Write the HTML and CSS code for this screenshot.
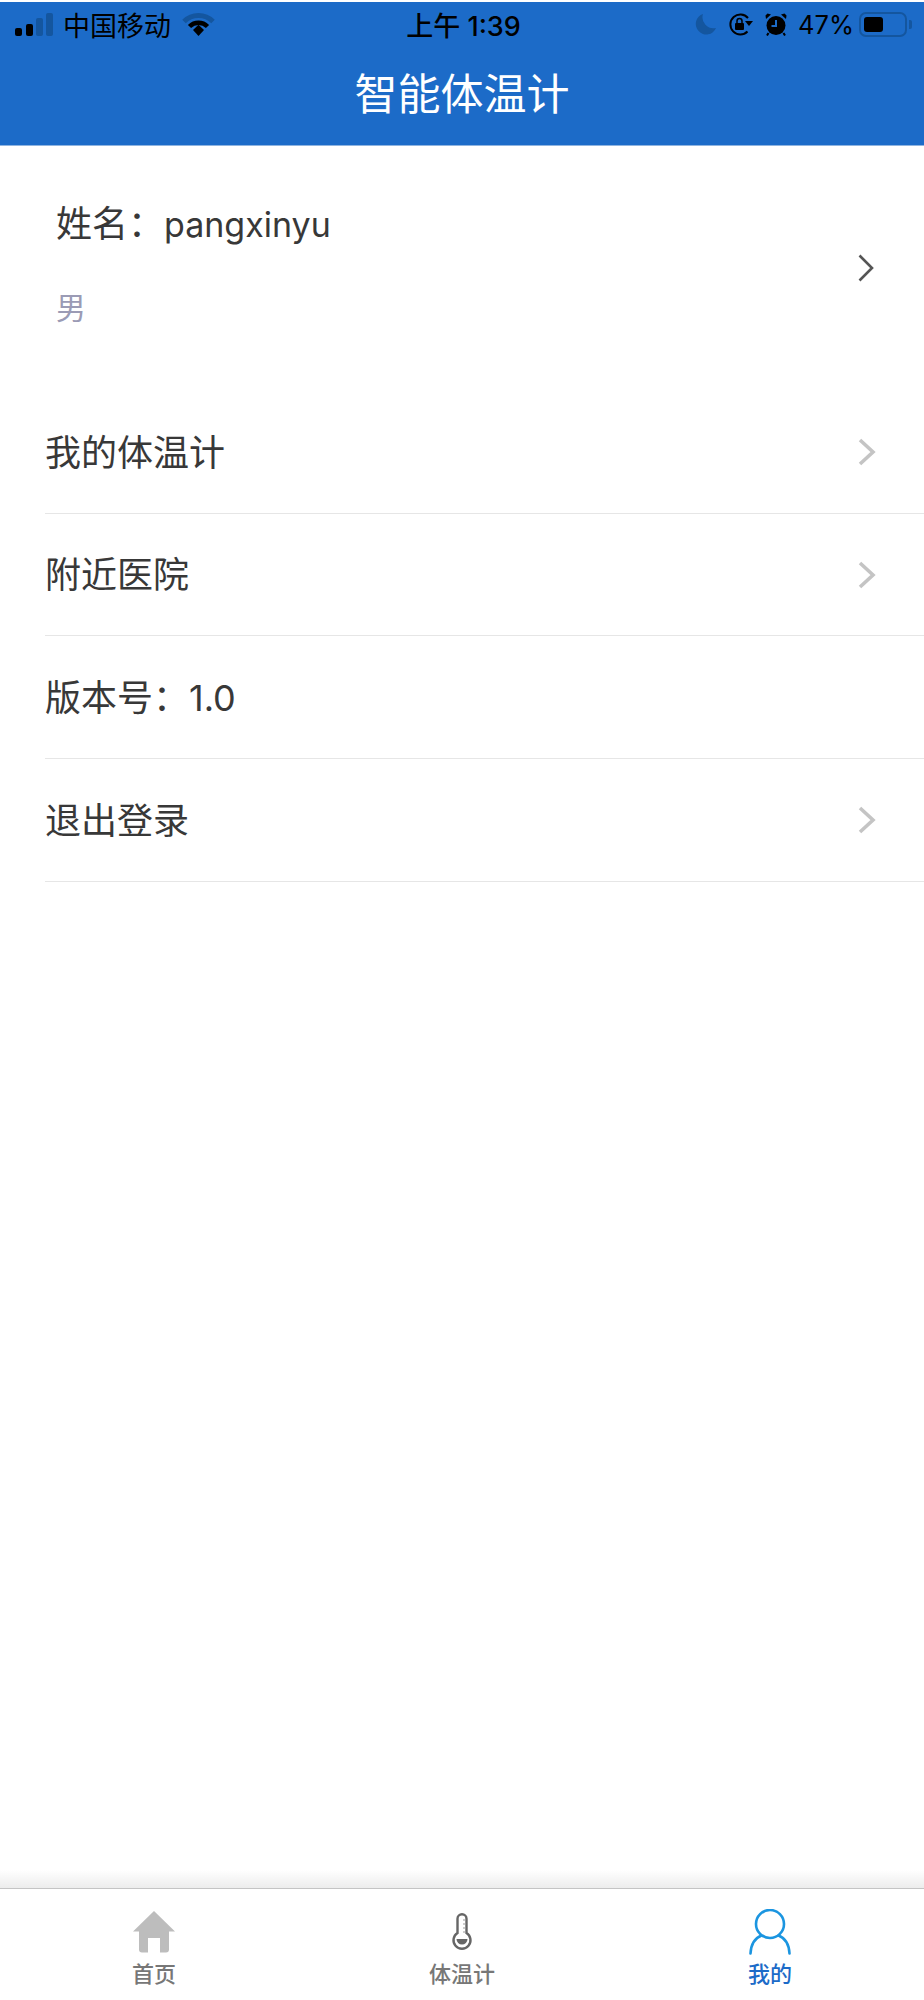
FILE: index.html
```html
<!DOCTYPE html>
<html lang="zh-CN">
<head>
  <meta charset="UTF-8" />
  <title>智能体温计</title>
  <link rel="stylesheet" href="styles.css">
</head>
<body>
  <div class="page">
    <header class="app-header">
      <div class="status-bar">
        <div class="status-left">
          <svg class="icon-signal" width="38" height="23" viewBox="0 0 38 23">
            <rect x="0" y="15" width="7" height="8" rx="2" fill="#000"/>
            <rect x="11" y="11" width="7" height="12" rx="2" fill="#000"/>
            <rect x="21" y="5" width="7" height="18" rx="2" fill="#14569f"/>
            <rect x="31" y="0" width="7" height="23" rx="2" fill="#14569f"/>
          </svg>
          <span class="carrier">中国移动</span>
          <svg class="icon-wifi" width="33" height="24" viewBox="0 0 32 24" fill="none">
            <path d="M1.500 9.500C9.500 1.500 22.500 1.500 30.500 9.500" stroke="#14569f" stroke-width="5"/>
            <path d="M7 14.500C12 9.500 20 9.500 25 14.500" stroke="#000" stroke-width="4.500"/>
            <path d="M10.500 18L16 12.800L21.500 18L16 24Z" fill="#000"/>
          </svg>
        </div>
        <div class="status-time">上午 1:39</div>
        <div class="status-right">
          <svg class="icon-moon" width="22" height="21" viewBox="0 0 22 21">
            <path d="M9 0A10.500 10.500 0 1 0 22 14A11 11 0 0 1 9 0Z" fill="#14569f"/>
          </svg>
          <svg width="25" height="23" viewBox="0 0 25 23" fill="none">
            <path d="M19.500 18.500A10 10 0 1 1 20 5" stroke="#000" stroke-width="2"/>
            <path d="M17 8H25L21 13Z" fill="#000"/>
            <rect x="7" y="10" width="9" height="7" rx="1" fill="#000"/>
            <path d="M9 10V8A2.500 2.500 0 0 1 14 8V10" stroke="#000" stroke-width="1.500"/>
          </svg>
          <svg width="22" height="23" viewBox="0 0 22 23">
            <circle cx="11" cy="12.500" r="9.500" fill="#000"/>
            <path d="M1 6L6 1.500L2.500 0.500L0.500 2.500Z" fill="#000"/>
            <path d="M21 6L16 1.500L19.500 0.500L21.500 2.500Z" fill="#000"/>
            <path d="M3.500 20L2 22.500M18.500 20L20 22.500" stroke="#000" stroke-width="2"/>
            <path d="M11 7V13H6.500" stroke="#1c6bc8" stroke-width="2" fill="none"/>
          </svg>
          <span class="battery-pct">47%</span>
          <div class="battery">
            <div class="battery-body"><div class="battery-fill"></div></div>
            <div class="battery-nub"></div>
          </div>
        </div>
      </div>
      <h1 class="app-title">智能体温计</h1>
    </header>

    <main class="content">
      <section class="profile">
        <div class="profile-info">
          <div class="profile-name">姓名：<span class="profile-value">pangxinyu</span></div>
          <div class="profile-gender">男</div>
        </div>
        <svg class="chevron" width="16" height="28" viewBox="0 0 16 28" fill="none">
          <path d="M1.500 1.500L14 14L1.500 26.500" stroke="#555" stroke-width="2.600"/>
        </svg>
      </section>

      <ul class="menu">
        <li class="menu-row">
          <span>我的体温计</span>
          <svg class="chevron" width="18" height="28" viewBox="0 0 18 28" fill="none">
            <path d="M2 2L15 14L2 26" stroke="#c4c4c4" stroke-width="3.600"/>
          </svg>
        </li>
        <li class="menu-row">
          <span>附近医院</span>
          <svg class="chevron" width="18" height="28" viewBox="0 0 18 28" fill="none">
            <path d="M2 2L15 14L2 26" stroke="#c4c4c4" stroke-width="3.600"/>
          </svg>
        </li>
        <li class="menu-row">
          <span>版本号：1.0</span>
        </li>
        <li class="menu-row">
          <span>退出登录</span>
          <svg class="chevron" width="18" height="28" viewBox="0 0 18 28" fill="none">
            <path d="M2 2L15 14L2 26" stroke="#c4c4c4" stroke-width="3.600"/>
          </svg>
        </li>
      </ul>
    </main>

    <div class="tab-shadow"></div>
    <nav class="tab-bar">
      <div class="tab">
        <svg width="42" height="42" viewBox="0 0 42 42">
          <path d="M21 0L42 20.500H36V38.500A3 3 0 0 1 33 41.500H27V27H15V41.500H9A3 3 0 0 1 6 38.500V20.500H0Z" fill="#bdbdbd"/>
        </svg>
        <span>首页</span>
      </div>
      <div class="tab">
        <svg width="42" height="42" viewBox="0 0 42 42" fill="none">
          <path d="M16.500 22V7.700A4.500 4.500 0 0 1 25.500 7.700V22A8.500 8.500 0 1 1 16.500 22Z" stroke="#666" stroke-width="2.400"/>
          <path d="M15.500 28H26.500A5.500 5.500 0 0 1 15.500 28Z" fill="#666"/>
          <path d="M22 9H25M22 13H25M22 17H25M22 21H25" stroke="#999" stroke-width="1"/>
        </svg>
        <span>体温计</span>
      </div>
      <div class="tab tab-active">
        <svg width="42" height="46" viewBox="0 0 42 46" fill="none">
          <circle cx="21" cy="15" r="14" stroke="#1b95e0" stroke-width="2.600"/>
          <path d="M12.500 26.500C6 29 2 36 1.500 44.500" stroke="#1b95e0" stroke-width="2.600" stroke-linecap="round"/>
          <path d="M29.500 26.500C36 29 40 36 40.500 44.500" stroke="#1b95e0" stroke-width="2.600" stroke-linecap="round"/>
        </svg>
        <span>我的</span>
      </div>
    </nav>
  </div>
</body>
</html>
```

FILE: styles.css
```css
* {
  box-sizing: border-box;
}

body {
  margin: 0;
  background: #fff;
  color: #383838;
  font-family: Inter, "Noto Sans CJK SC", sans-serif;
}

.page {
  display: flex;
  flex-direction: column;
  height: 2000px;
  padding-top: 2px;
  overflow: hidden;
}

.app-header {
  height: 144px;
  background: #1c6bc8;
  border-bottom: 1px solid #8fb4e0;
}

.status-bar {
  display: grid;
  grid-template-columns: 1fr auto 1fr;
  align-items: center;
  height: 44px;
  padding: 0 12px 0 15px;
  color: #000;
  font-size: 27px;
}

.status-left,
.status-right {
  display: flex;
  align-items: center;
}

.status-left {
  gap: 10px;
}

.carrier {
  margin-right: 1px;
}

.status-time {
  font-size: 27px;
  font-weight: 500;
}

.status-right {
  justify-content: flex-end;
  gap: 12px;
}

.battery-pct {
  margin: 0 -7px 0 -1px;
  font-size: 25.5px;
}

.battery {
  display: flex;
  align-items: center;
  gap: 2px;
}

.battery-body {
  width: 48px;
  height: 25px;
  padding: 3px;
  border: 2px solid #14569f;
  border-radius: 7px;
}

.battery-fill {
  width: 19px;
  height: 100%;
  background: #000;
  border-radius: 3px;
}

.battery-nub {
  width: 3px;
  height: 9px;
  background: #14569f;
  border-radius: 0 2px 2px 0;
}

.app-title {
  margin: 0;
  padding-top: 18px;
  color: #fff;
  font-size: 43px;
  font-weight: 400;
  line-height: 60px;
  text-align: center;
}

.content {
  flex: 1;
}

.profile {
  display: flex;
  align-items: center;
  justify-content: space-between;
  height: 245px;
  padding: 0 50px 2px 56px;
}

.profile-info {
  margin-top: -9px;
}

.profile-name {
  font-size: 36px;
  line-height: 50px;
}

.profile-value {
  font-size: 34px;
}

.profile-gender {
  margin-top: 38px;
  color: #9b9bb5;
  font-size: 30px;
  line-height: 40px;
}

.menu {
  margin: 0;
  padding: 0 0 0 45px;
  list-style: none;
}

.menu-row {
  display: flex;
  align-items: center;
  justify-content: space-between;
  height: 122.67px;
  padding: 0 48px 4px 0;
  border-bottom: 1px solid #e6e6e6;
  font-size: 36px;
}

.menu-row .chevron {
  margin-top: 5px;
}

.tab-shadow {
  height: 19px;
  background: linear-gradient(#fff, #ececec);
  border-bottom: 1px solid #c4c4c4;
}

.tab-bar {
  display: grid;
  grid-template-columns: repeat(3, 1fr);
  height: 111px;
}

.tab {
  display: flex;
  flex-direction: column;
  align-items: center;
  padding-top: 22px;
  color: #777;
  font-size: 22px;
  font-weight: 500;
  line-height: 30px;
}

.tab svg {
  margin-bottom: 6px;
}

.tab-active {
  color: #1c6bc8;
  padding-top: 20px;
}

.tab-active svg {
  margin-bottom: 4px;
}
```
